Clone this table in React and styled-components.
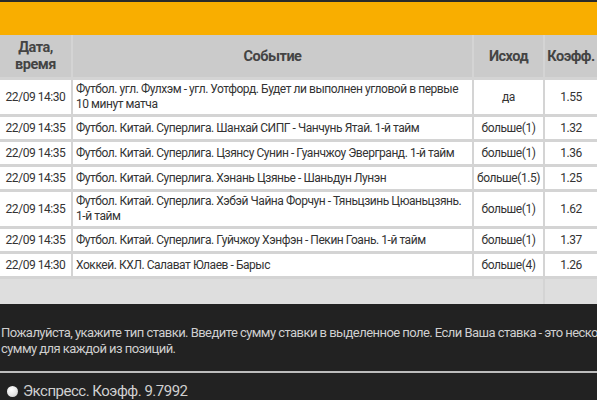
import React from "react";
import styled, { createGlobalStyle } from "styled-components";

const Global = createGlobalStyle`
  html, body { margin: 0; padding: 0; background: #222; }
  body { width: 597px; height: 400px; overflow: hidden; font-family: Roboto, "Liberation Sans", sans-serif; }
`;

const Page = styled.div`
  width: 597px;
  overflow: hidden;
  background: #222;
`;

const TopStrip = styled.div`
  height: 2px;
  background: #2a2a2a;
`;

const OrangeBar = styled.div`
  height: 33px;
  background: #f9ae00;
`;

const Grid = styled.div`
  display: grid;
  grid-template-columns: 71px 399px 69px 52px;
  column-gap: 2px;
  row-gap: 3px;
  width: 597px;
  background: #d4d4d4;
`;

const Head = styled.div`
  background: #cbcbcb;
  color: #444;
  font-weight: 700;
  font-size: 14.5px;
  line-height: 17px;
  height: 42px;
  display: flex;
  align-items: center;
  justify-content: center;
  text-align: center;
  letter-spacing: -0.5px;
  white-space: nowrap;
`;

const Cell = styled.div`
  background: ${(p) => (p.$empty ? "#dedede" : "#fff")};
  color: #333;
  font-size: 12px;
  line-height: 15px;
  letter-spacing: -0.45px;
  min-height: ${(p) => (p.$tall ? "25px" : "22px")};
  padding: 2px ${(p) => (p.$align === "left" ? "3px" : "2px")};
  box-sizing: border-box;
  display: flex;
  align-items: center;
  justify-content: ${(p) => (p.$align === "left" ? "flex-start" : "center")};
  text-align: ${(p) => (p.$align === "left" ? "left" : "center")};
  grid-column: ${(p) => p.$span || "auto"};
`;

const Footer = styled.div`
  background: #222;
  color: #cfcfcf;
  width: 800px;
`;

const Notice = styled.p`
  margin: 0;
  padding: 21px 0 0 1px;
  font-size: 13px;
  line-height: 16px;
  letter-spacing: -0.55px;
  height: 46px;
`;

const Rule = styled.hr`
  margin: 0;
  border: 0;
  height: 2px;
  background: #bdbdbd;
  width: 597px;
`;

const RadioRow = styled.label`
  display: flex;
  align-items: center;
  gap: 5px;
  padding: 9px 0 0 7px;
  font-size: 15px;
  line-height: 18px;
  letter-spacing: -0.5px;
  color: #d0d0d0;
`;

const Radio = styled.span`
  width: 11px;
  height: 11px;
  border-radius: 50%;
  background: radial-gradient(circle at 40% 35%, #ffffff 0%, #e6e6e6 55%, #bdbdbd 100%);
  display: inline-block;
  flex: none;
`;

const rows = [
  ["22/09 14:30", "Футбол. угл. Фулхэм - угл. Уотфорд. Будет ли выполнен угловой в первые 10 минут матча", "да", "1.55"],
  ["22/09 14:35", "Футбол. Китай. Суперлига. Шанхай СИПГ - Чанчунь Ятай. 1-й тайм", "больше(1)", "1.32"],
  ["22/09 14:35", "Футбол. Китай. Суперлига. Цзянсу Сунин - Гуанчжоу Эвергранд. 1-й тайм", "больше(1)", "1.36"],
  ["22/09 14:35", "Футбол. Китай. Суперлига. Хэнань Цзянье - Шаньдун Лунэн", "больше(1.5)", "1.25"],
  ["22/09 14:35", "Футбол. Китай. Суперлига. Хэбэй Чайна Форчун - Тяньцзинь Цюаньцзянь. 1-й тайм", "больше(1)", "1.62"],
  ["22/09 14:35", "Футбол. Китай. Суперлига. Гуйчжоу Хэнфэн - Пекин Гоань. 1-й тайм", "больше(1)", "1.37"],
  ["22/09 14:30", "Хоккей. КХЛ. Салават Юлаев - Барыс", "больше(4)", "1.26"],
];

export default function App() {
  return (
    <Page>
      <Global />
      <TopStrip />
      <OrangeBar />
      <Grid>
        <Head>Дата,<br />время</Head>
        <Head>Событие</Head>
        <Head>Исход</Head>
        <Head>Коэфф.</Head>
        {rows.map((r, i) => (
          <React.Fragment key={i}>
            <Cell>{r[0]}</Cell>
            <Cell $align="left">{r[1]}</Cell>
            <Cell>{r[2]}</Cell>
            <Cell>{r[3]}</Cell>
          </React.Fragment>
        ))}
        <Cell $empty $tall $span="1 / 4" />
        <Cell $empty $tall />
      </Grid>
      <Footer>
        <Notice>
          Пожалуйста, укажите тип ставки. Введите сумму ставки в выделенное поле. Если Ваша ставка - это несколько ставок, укажите
          <br />
          сумму для каждой из позиций.
        </Notice>
        <Rule />
        <RadioRow>
          <Radio />
          Экспресс. Коэфф. 9.7992
        </RadioRow>
      </Footer>
    </Page>
  );
}
